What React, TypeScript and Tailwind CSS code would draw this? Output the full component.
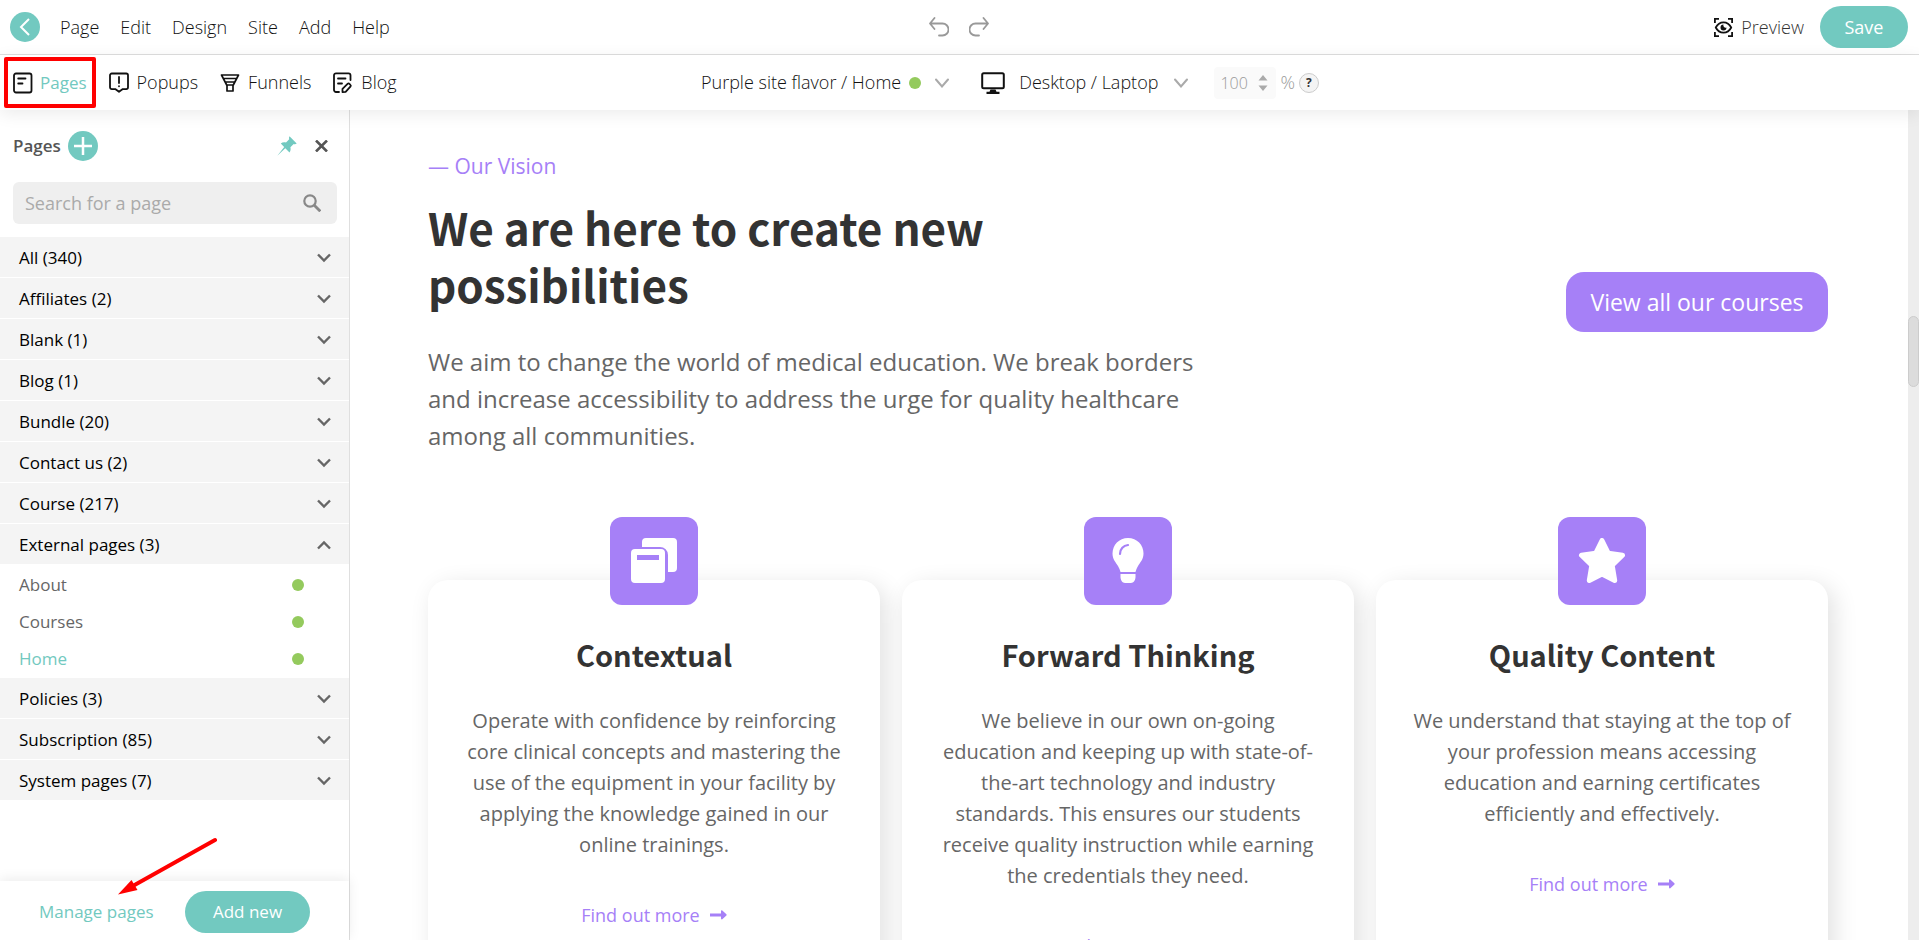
import { useState } from 'react';

type PageGroup = {
    name: string;
    count: number;
    pages?: string[];
};

const MENU = ['Page', 'Edit', 'Design', 'Site', 'Add', 'Help'];

const GROUPS: PageGroup[] = [
    { name: 'All', count: 340 },
    { name: 'Affiliates', count: 2 },
    { name: 'Blank', count: 1 },
    { name: 'Blog', count: 1 },
    { name: 'Bundle', count: 20 },
    { name: 'Contact us', count: 2 },
    { name: 'Course', count: 217 },
    { name: 'External pages', count: 3, pages: ['About', 'Courses', 'Home'] },
    { name: 'Policies', count: 3 },
    { name: 'Subscription', count: 85 },
    { name: 'System pages', count: 7 },
];

const CARDS = [
    {
        title: 'Contextual',
        icon: <CardsIcon />,
        text: 'Operate with confidence by reinforcing core clinical concepts and mastering the use of the equipment in your facility by applying the knowledge gained in our online trainings.',
    },
    {
        title: 'Forward Thinking',
        icon: <BulbIcon />,
        text: 'We believe in our own on-going education and keeping up with state-of-the-art technology and industry standards. This ensures our students receive quality instruction while earning the credentials they need.',
    },
    {
        title: 'Quality Content',
        icon: <StarIcon />,
        text: 'We understand that staying at the top of your profession means accessing education and earning certificates efficiently and effectively.',
    },
];

function CardsIcon() {
    return (
        <svg width="46" height="46" viewBox="0 0 46 46" fill="#fff">
            <path d="M15 0h27a4 4 0 0 1 4 4v26a4 4 0 0 1-4 4h-5V17a8 8 0 0 0-8-8H11V4a4 4 0 0 1 4-4z" />
            <path fillRule="evenodd" d="M4 11h26a4 4 0 0 1 4 4v26a4 4 0 0 1-4 4H4a4 4 0 0 1-4-4V15a4 4 0 0 1 4-4zM6 17v5h22v-5z" />
        </svg>
    );
}

function BulbIcon() {
    return (
        <svg width="32" height="46" viewBox="0 0 32 46">
            <path fill="#fff" d="M16 0C7 0 .5 7 .5 15.500c0 6 3.500 9 5.500 12.500 1.200 2 2 4 2.500 6h15c.5-2 1.300-4 2.500-6 2-3.500 5.500-6.500 5.500-12.500C31.500 7 25 0 16 0zM8.500 36h15v3c0 3-2 6-4.500 6h-6c-2.500 0-4.500-3-4.500-6z" />
            <path d="M8 16c0-5 3.500-8.500 8-9" fill="none" stroke="#a680f7" strokeWidth="2.200" strokeLinecap="round" />
        </svg>
    );
}

function StarIcon() {
    return (
        <svg width="48" height="46" viewBox="0 0 48 46" fill="#fff" stroke="#fff" strokeWidth="5" strokeLinejoin="round">
            <path d="M24 2.500l6.300 12.800 14.200 2-10.300 10L36.700 42.500 24 36 11.300 42.500l2.500-15.200-10.300-10 14.200-2z" />
        </svg>
    );
}

function PageIcon() {
    return (
        <svg width="20" height="22" viewBox="0 0 20 22" fill="none" stroke="#111" strokeWidth="1.800" strokeLinecap="round">
            <rect x="1" y="1.500" width="17.500" height="19" rx="2" />
            <path d="M5.200 6.500h7.300M5.200 11.500h4.300" />
        </svg>
    );
}

function PopupIcon() {
    return (
        <svg width="20" height="22" viewBox="0 0 20 22" fill="none" stroke="#111" strokeWidth="1.800" strokeLinecap="round" strokeLinejoin="round">
            <path d="M2.800 1.500h14.400A1.800 1.800 0 0 1 19 3.300v12a1.800 1.800 0 0 1-1.800 1.800h-3.400L10 19.800l-3.800-2.700H2.800A1.800 1.800 0 0 1 1 15.300v-12a1.800 1.800 0 0 1 1.800-1.800z" />
            <path d="M10 5v6M10 14.200v.1" />
        </svg>
    );
}

function FunnelIcon() {
    return (
        <svg width="20" height="20" viewBox="0 0 20 20" fill="none" stroke="#111" strokeWidth="1.700" strokeLinejoin="round">
            <path d="M1.500 2h17l-5.200 10H6.700zM3.500 5.500h13M5.300 9h9.400M7 12v6h6v-6" />
        </svg>
    );
}

function BlogIcon() {
    return (
        <svg width="20" height="22" viewBox="0 0 20 22" fill="none" stroke="#111" strokeWidth="1.800" strokeLinecap="round" strokeLinejoin="round">
            <path d="M6 20H3a2 2 0 0 1-2-2V3.300a2 2 0 0 1 2-2h12.500a2 2 0 0 1 2 2V8M5 6.500h7.500M5 11.500h4" />
            <path d="M9.500 20.200v-3.400l5.300-5.100c1-.9 3.800 1.600 2.800 2.700l-5 5.500z" />
        </svg>
    );
}

function MonitorIcon() {
    return (
        <svg width="24" height="22" viewBox="0 0 24 22">
            <rect x="1.200" y="1.200" width="21.600" height="15.100" rx="1.500" fill="none" stroke="#111" strokeWidth="2" />
            <path d="M9.500 17.500h5l1 2.300h3V22h-13v-2.200h3z" fill="#111" />
        </svg>
    );
}

function PreviewIcon() {
    return (
        <svg width="19" height="19" viewBox="0 0 19 19" fill="none" stroke="#111" strokeWidth="1.800">
            <path d="M.9 5V.9H5M14 .9h4.100V5M18.100 14v4.100H14M5 18.100H.9V14" />
            <path d="M1.800 9.500C3.500 6 6 4.300 9.500 4.300s6 1.700 7.700 5.200c-1.700 3.500-4.200 5.200-7.700 5.200s-6-1.700-7.700-5.200z" />
            <path d="M9.500 6.500a3 3 0 1 0 3 3 2.300 2.300 0 0 1-3-3z" fill="#111" stroke="none" />
        </svg>
    );
}

function UndoIcon({ flipped = false }: { flipped?: boolean }) {
    return (
        <svg width="20" height="20" viewBox="0 0 20 20" fill="none" stroke="#999" strokeWidth="1.800" strokeLinecap="round" strokeLinejoin="round" className={flipped ? '-scale-x-100' : ''}>
            <path d="M5.500 1L1 6.500 5.500 12M1 6.500h12.500a5.600 5.600 0 0 1 0 12H10" />
        </svg>
    );
}

function ThinChevron() {
    return (
        <svg width="14" height="10" viewBox="0 0 14 10" fill="none" stroke="#aaa" strokeWidth="2" strokeLinecap="round" className="pointer-events-none">
            <path d="M1 1.500l6 7 6-7" />
        </svg>
    );
}

function Chevron({ up }: { up: boolean }) {
    return (
        <svg width="14" height="10" viewBox="0 0 14 10" fill="none" stroke="#666" strokeWidth="2.400" className={up ? 'rotate-180' : ''}>
            <path d="M1 1.500l6 6 6-6" />
        </svg>
    );
}

function PinIcon() {
    return (
        <svg width="20" height="20" viewBox="0 0 20 20" fill="#72c9c0">
            <path d="M12.500.300l7.200 7.200c-1 .7-2 .8-3 .4l-3.300 3.300c.5 2 .2 3.700-.9 5.200L8.300 12.200.300 19.700 7.200 11 3.800 7.500c1.500-1.100 3.200-1.400 5.200-.9l3.200-3.300c-.4-1-.3-2 .3-3z" />
        </svg>
    );
}

function ArrowIcon() {
    return (
        <svg width="17" height="10" viewBox="0 0 17 10" fill="#a680f7">
            <path d="M0 3.500h11V1.200c0-.9.700-1.100 1.300-.6l4.100 3.600c.4.400.4.900 0 1.300l-4.100 3.700c-.6.500-1.300.2-1.300-.6V6.500H0z" />
        </svg>
    );
}

function Dot() {
    return <span className="size-3 rounded-full bg-[#94ca5d]" />;
}

function TopBar() {
    return (
        <header className="grid h-[55px] shrink-0 grid-cols-[1fr_auto_1fr] items-center border-b border-[#dfdfdf] pr-[11px] pl-[10px] text-[18px] font-light">
            <div className="flex items-center">
                <button aria-label="Back" className="mr-5 flex size-[30px] items-center justify-center rounded-full bg-[#72c9c0]">
                    <svg width="12" height="18" viewBox="0 0 12 18" fill="none" stroke="#fff" strokeWidth="2">
                        <path d="M10 1L2 9l8 8" />
                    </svg>
                </button>
                <nav className="flex gap-[21px]">
                    {MENU.map((item) => (
                        <button key={item}>{item}</button>
                    ))}
                </nav>
            </div>
            <div className="flex gap-5">
                <button aria-label="Undo"><UndoIcon /></button>
                <button aria-label="Redo"><UndoIcon flipped /></button>
            </div>
            <div className="flex items-center justify-end gap-4">
                <button className="flex items-center gap-2 text-[#333]">
                    <PreviewIcon />
                    Preview
                </button>
                <button className="h-[42px] w-[88px] rounded-full bg-[#72c9c0] font-normal text-white">Save</button>
            </div>
        </header>
    );
}

function ToolBar() {
    return (
        <div className="relative z-10 flex h-[55px] shrink-0 items-center bg-white text-[18px] font-light shadow-[0_4px_16px_rgba(0,0,0,0.08)]">
            <nav className="flex w-[701px] items-center gap-[22px] pl-[13px]">
                <button className="relative flex items-center gap-[7px] text-[17px] font-normal text-[#72c9c0]">
                    <PageIcon />
                    Pages
                    {/* Highlight frame around the active tab */}
                    <span className="absolute -inset-x-[9px] -inset-y-[13px] rounded-xs border-4 border-[#ff0000]" />
                </button>
                <button className="flex items-center gap-2">
                    <PopupIcon />
                    Popups
                </button>
                <button className="flex items-center gap-2">
                    <FunnelIcon />
                    Funnels
                </button>
                <button className="flex items-center gap-2">
                    <BlogIcon />
                    Blog
                </button>
            </nav>
            <div className="flex items-center">
                <div className="flex items-center">
                    <select aria-label="Current page" className="field-sizing-content appearance-none">
                        <option>Purple site flavor / Home</option>
                    </select>
                    <span className="mr-[14px] ml-2 flex"><Dot /></span>
                    <ThinChevron />
                </div>
                <div className="ml-8 flex items-center">
                    <MonitorIcon />
                    <select aria-label="Device" className="mr-4 ml-[14px] field-sizing-content appearance-none">
                        <option>Desktop / Laptop</option>
                    </select>
                    <ThinChevron />
                </div>
                <div className="ml-[26px] flex items-center text-[#999]">
                    <label className="flex h-8 w-[62px] items-center justify-between rounded-sm bg-[#fafafa] pr-2 pl-[6px]">
                        <input type="text" inputMode="numeric" aria-label="Zoom" defaultValue="100" className="w-8 text-base outline-none" />
                        <svg width="10" height="16" viewBox="0 0 10 16" fill="#aaa">
                            <path d="M5 0l4.500 5.500h-9zM5 16L.5 10.500h9z" />
                        </svg>
                    </label>
                    <span className="mx-1">%</span>
                    <button aria-label="Zoom help" className="flex size-5 items-center justify-center rounded-full border border-[#ccc] bg-[#f4f4f4] text-xs font-bold text-[#333]">?</button>
                </div>
            </div>
        </div>
    );
}

function Sidebar() {
    const [openGroup, setOpenGroup] = useState('External pages');

    return (
        <aside className="flex w-[350px] shrink-0 flex-col border-r border-[#dfdfdf]">
            <div className="flex h-[72px] items-center px-[13px]">
                <h2 className="font-semibold text-[#555]">Pages</h2>
                <button aria-label="Add page" className="ml-[7px] flex size-[30px] items-center justify-center rounded-full bg-[#72c9c0]">
                    <svg width="18" height="18" viewBox="0 0 18 18" stroke="#fff" strokeWidth="2.500">
                        <path d="M9 0v18M0 9h18" />
                    </svg>
                </button>
                <div className="ml-auto flex items-center gap-[18px] pr-2">
                    <button aria-label="Pin panel"><PinIcon /></button>
                    <button aria-label="Close panel">
                        <svg width="13" height="12" viewBox="0 0 13 12" stroke="#555" strokeWidth="2.600">
                            <path d="M1 .500l11 11M12 .500l-11 11" />
                        </svg>
                    </button>
                </div>
            </div>
            <label className="mr-3 mb-[13px] ml-[13px] flex h-[42px] shrink-0 items-center rounded-md bg-[#efefef] pr-4 pl-3">
                <input type="text" aria-label="Search for a page" placeholder="Search for a page" className="min-w-0 flex-1 text-[18px] outline-none placeholder:text-[#aaa]" />
                <svg width="18" height="18" viewBox="0 0 18 18" fill="none" stroke="#888" strokeWidth="2.200">
                    <circle cx="7" cy="7" r="5.700" />
                    <path d="M11 11l6.300 6.300" strokeWidth="2.800" />
                </svg>
            </label>
            <div className="flex flex-1 flex-col gap-px">
                {GROUPS.map((group) => {
                    const isOpen = group.name === openGroup;
                    return (
                        <div key={group.name}>
                            <button
                                onClick={() => setOpenGroup(isOpen ? '' : group.name)}
                                className="flex h-10 w-full items-center justify-between bg-[#f4f4f4] pt-[2px] pr-[18px] pl-[19px] text-black"
                            >
                                {group.name} ({group.count})
                                <Chevron up={isOpen} />
                            </button>
                            {isOpen && group.pages && (
                                <ul className="pt-[2px]">
                                    {group.pages.map((page) => (
                                        <li key={page}>
                                            <a href="#" className={`flex h-[37px] items-center justify-between pr-[45px] pl-[19px] ${page === 'Home' ? 'text-[#72c9c0]' : 'text-[#666]'}`}>
                                                {page}
                                                <Dot />
                                            </a>
                                        </li>
                                    ))}
                                </ul>
                            )}
                        </div>
                    );
                })}
            </div>
            <div className="relative flex h-[59px] shrink-0 items-center justify-between bg-white pt-[3px] pr-[39px] pl-[39px] shadow-[0_-2px_12px_rgba(0,0,0,0.08)]">
                <a href="#" className="text-[#72c9c0]">Manage pages</a>
                <button className="h-[42px] w-[125px] rounded-full bg-[#72c9c0] text-white">Add new</button>
                {/* Arrow pointing at the manage link */}
                <svg width="100" height="60" viewBox="0 0 100 60" className="pointer-events-none absolute bottom-11 left-[117px]">
                    <path d="M98 4L14 51" stroke="#ff0000" strokeWidth="4" strokeLinecap="round" />
                    <path d="M1 58.500L14.500 44l6 10z" fill="#ff0000" />
                </svg>
            </div>
        </aside>
    );
}

function FeatureCard({ title, icon, text }: (typeof CARDS)[number]) {
    return (
        <article className="flex flex-1 flex-col items-center rounded-[20px] bg-white px-8 pb-10 shadow-[6px_6px_24px_rgba(0,0,0,0.12)]">
            <div className="-mt-[63px] flex size-[88px] shrink-0 items-center justify-center rounded-xl bg-[#a680f7]">{icon}</div>
            <h3 className="mt-7 font-['Noto_Sans_CJK_SC','Open_Sans',sans-serif] text-[29px] leading-[42px] font-bold text-[#333]">{title}</h3>
            <p className="mt-[30px] text-center text-[20px] leading-[31px] text-[#666]">{text}</p>
            <a href="#" className="mt-[41px] flex items-center gap-[10px] text-[18px] leading-[28px] text-[#a680f7]">
                Find out more
                <ArrowIcon />
            </a>
        </article>
    );
}

export default function App() {
    return (
        <div className="flex h-screen flex-col overflow-hidden bg-white font-['Open_Sans','Noto_Sans',sans-serif] text-[17px] text-[#111]">
            <TopBar />
            <ToolBar />
            <div className="flex min-h-0 flex-1">
                <Sidebar />
                <main className="min-w-0 flex-1 overflow-hidden pt-10 pr-20 pl-[78px] text-[#333]">
                    <section className="flex items-center justify-between">
                        <div className="w-[780px]">
                            <p className="text-[21px] leading-8 text-[#a680f7]">— Our Vision</p>
                            <h1 className="mt-[17px] font-['Noto_Sans_CJK_SC','Open_Sans',sans-serif] text-[44px] leading-[57px] font-bold">We are here to create new possibilities</h1>
                            <p className="mt-[30px] text-[24px] leading-[37px] text-[#666]">
                                We aim to change the world of medical education. We break borders and increase accessibility to address the urge for quality healthcare among all communities.
                            </p>
                        </div>
                        <button className="h-[60px] w-[262px] rounded-[18px] bg-[#a680f7] text-[23px] text-white">View all our courses</button>
                    </section>
                    <section className="mt-[126px] flex gap-[22px]">
                        {CARDS.map((card) => (
                            <FeatureCard key={card.title} {...card} />
                        ))}
                    </section>
                </main>
                <div className="w-[11px] shrink-0 bg-[#ededed] pt-[206px]">
                    <div className="h-[71px] rounded-full border border-[#ccc] bg-[#dcdcdc]" />
                </div>
            </div>
        </div>
    );
}
